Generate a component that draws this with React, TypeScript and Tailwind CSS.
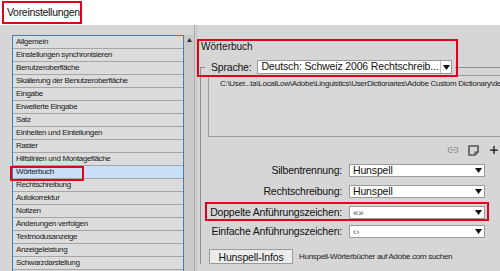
import { Link2, Plus } from "lucide-react";

const items = [
  "Allgemein",
  "Einstellungen synchronisieren",
  "Benutzeroberfläche",
  "Skalierung der Benutzeroberfläche",
  "Eingabe",
  "Erweiterte Eingabe",
  "Satz",
  "Einheiten und Einteilungen",
  "Raster",
  "Hilfslinien und Montagefläche",
  "Wörterbuch",
  "Rechtschreibung",
  "Autokorrektur",
  "Notizen",
  "Änderungen verfolgen",
  "Textmodusanzeige",
  "Anzeigeleistung",
  "Schwarzdarstellung",
];

function Arrow() {
  return (
    <svg width="7" height="5" viewBox="0 0 7 5">
      <polygon points="0,0 7,0 3.5,5" fill="#111" />
    </svg>
  );
}

function Select({
  value,
  className,
  divider = false,
  small = false,
}: {
  value: string;
  className: string;
  divider?: boolean;
  small?: boolean;
}) {
  return (
    <div className={`flex items-stretch border border-[#9a9a9a] bg-white ${className}`}>
      <span
        className={`flex-1 pl-[3px] whitespace-nowrap overflow-hidden ${
          small
            ? "text-[9.5px] leading-[11px] text-[#444]"
            : "text-[10.5px] leading-[11px] tracking-[-0.15px] text-[#111]"
        }`}
      >
        {value}
      </span>
      <span
        className={`flex w-[11px] items-center justify-center ${
          divider ? "border-l border-[#c0c0c0]" : ""
        }`}
      >
        <Arrow />
      </span>
    </div>
  );
}

const rows = [
  { label: "Silbentrennung:", value: "Hunspell", mt: "mt-[8px]", small: false },
  { label: "Rechtschreibung:", value: "Hunspell", mt: "mt-[8px]", small: false },
  { label: "Doppelte Anführungszeichen:", value: "«»", mt: "mt-[8px]", small: true },
  { label: "Einfache Anführungszeichen:", value: "‹›", mt: "mt-[6px]", small: true },
];

export default function App() {
  return (
    <div className="relative w-[500px] h-[271px] overflow-hidden bg-[#d6d6d6] font-['Liberation_Sans',Arial,sans-serif] text-[#1a1a1a]">
      {/* title */}
      <div className="h-[25px] bg-white pt-[1px] pl-[2px]">
        <div className="flex h-[23px] w-[80px] items-center border-2 border-[#e2001a] pl-[3px] text-[10.5px] tracking-[-0.3px] text-[#111]">
          Voreinstellungen
        </div>
      </div>

      <div className="flex h-[246px]">
        {/* category list */}
        <div className="flex w-[194px] pl-[12px] pt-[10px]">
          <div className="w-[172px] border-l border-t border-r border-[#3d7fbf] bg-[#dcdcdc]">
            {items.map((it) => (
              <div
                key={it}
                className={`h-[13px] border-b border-[#a4a4a4] pl-[3px] text-[8px] leading-[12px] tracking-[-0.35px] whitespace-nowrap ${
                  it === "Wörterbuch" ? "bg-[#c8e0f8]" : ""
                }`}
              >
                {it}
              </div>
            ))}
          </div>
          <div className="w-[10px] bg-[#cacaca] flex justify-center pt-[3px]">
            <svg width="5" height="4" viewBox="0 0 5 4">
              <polygon points="0,4 5,4 2.5,0" fill="#333" />
            </svg>
          </div>
        </div>

        {/* settings panel */}
        <div className="flex-1 border-l border-[#a8a8a8] pl-[1px]">
          <div className="border-l border-[#c2c2c2] h-full pl-[3px]">
            <div className="pt-[16px] pl-[1px] text-[10px] leading-[12px] text-[#111]">Wörterbuch</div>

            <fieldset className="mt-[7px] border-l border-t border-[#8f8f8f] min-w-0">
              <legend className="ml-[4px] flex items-center pl-[6px] pr-[3px]">
                <span className="text-[10.5px] leading-[13px] tracking-[-0.2px] text-[#111] mr-[6px]">Sprache:</span>
                <Select value="Deutsch: Schweiz 2006 Rechtschreib..." className="w-[195px] h-[14px]" divider />
              </legend>

              <div className="ml-[7px] mt-[1px] h-[62px] border border-[#9a9a9a] border-r-0 bg-[#d8d8d8] pl-[11px] pt-[3px] text-[8px] leading-[10px] tracking-[-0.3px] text-[#222] whitespace-nowrap overflow-hidden">
                C:\User...ta\LocalLow\Adobe\Linguistics\UserDictionaries\Adobe Custom Dictionary\de
              </div>

              <div className="mt-[7px] flex h-[12px] items-center justify-end gap-[9px] pr-[1px]">
                <Link2 size={12} strokeWidth={2} color="#8a8a8a" />
                <svg width="11" height="11" viewBox="0 0 11 11">
                  <path d="M1 1 H10 V7 L7 10 H1 Z" fill="none" stroke="#555" strokeWidth="1.6" />
                  <path d="M7 10 V7 H10" fill="none" stroke="#555" strokeWidth="1.2" />
                </svg>
                <Plus size={12} strokeWidth={2.5} color="#111" />
              </div>

              {rows.map((r) => (
                <div key={r.label} className={`flex h-[13px] items-center ${r.mt} ml-[7px]`}>
                  <span className="w-[134px] text-right text-[10.5px] leading-[13px] tracking-[-0.2px] text-[#111] whitespace-nowrap">
                    {r.label}
                  </span>
                  <Select value={r.value} className="ml-[7px] w-[136px] h-[13px]" small={r.small} />
                </div>
              ))}

              <div className="ml-[8px] mt-[11px] flex items-center">
                <button className="h-[15px] w-[84px] border border-[#9a9a9a] bg-[#ececec] text-[10.5px] leading-[12px] tracking-[-0.15px] text-[#111]">
                  Hunspell-Infos
                </button>
                <span className="ml-[6px] text-[8px] leading-[10px] tracking-[-0.3px] text-[#222] whitespace-nowrap">
                  Hunspell-Wörterbücher auf Adobe.com suchen
                </span>
              </div>
            </fieldset>
          </div>
        </div>
      </div>

      {/* red annotation boxes */}
      <div className="absolute left-[197px] top-[39px] w-[261px] h-[38px] border-2 border-[#e2001a]" />
      <div className="absolute left-[10px] top-[166px] w-[74px] h-[15px] border-2 border-[#e2001a]" />
      <div className="absolute left-[205px] top-[202px] w-[284px] h-[19px] border-2 border-[#e2001a]" />
    </div>
  );
}
